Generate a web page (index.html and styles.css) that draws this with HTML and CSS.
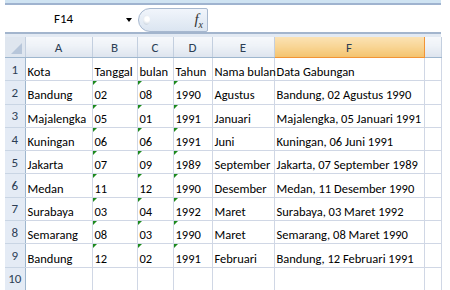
FILE: index.html
```html
<!DOCTYPE html>
<html lang="id">
<head>
  <meta charset="UTF-8" />
  <title>Data Gabungan</title>
  <link rel="stylesheet" href="styles.css">
</head>
<body>
  <div class="window">
    <div class="top-strip"></div>
    <div class="formula-bar">
      <div class="name-box">
        <span class="name">F14</span>
        <span class="drop"></span>
      </div>
      <div class="fx-pill">
        <span class="knob"></span>
        <span class="fx">f<sub>x</sub></span>
      </div>
      <div class="formula-input"></div>
    </div>
    <div class="bar-gap"></div>

    <table class="grid">
      <colgroup>
        <col class="c-row">
        <col class="c-a">
        <col class="c-b">
        <col class="c-c">
        <col class="c-d">
        <col class="c-e">
        <col class="c-f">
        <col class="c-g">
      </colgroup>
      <thead>
        <tr>
          <th class="corner"><span class="all"></span></th>
          <th>A</th>
          <th>B</th>
          <th>C</th>
          <th>D</th>
          <th>E</th>
          <th class="sel">F</th>
          <th></th>
        </tr>
      </thead>
      <tbody>
        <tr>
          <th>1</th><td>Kota</td><td>Tanggal</td><td>bulan</td><td>Tahun</td><td>Nama bulan</td><td>Data Gabungan</td><td></td>
        </tr>
        <tr>
          <th>2</th><td>Bandung</td><td class="txt">02</td><td class="txt">08</td><td class="txt">1990</td><td>Agustus</td><td>Bandung, 02 Agustus 1990</td><td></td>
        </tr>
        <tr>
          <th>3</th><td>Majalengka</td><td class="txt">05</td><td class="txt">01</td><td class="txt">1991</td><td>Januari</td><td>Majalengka, 05 Januari 1991</td><td></td>
        </tr>
        <tr>
          <th>4</th><td>Kuningan</td><td class="txt">06</td><td class="txt">06</td><td class="txt">1991</td><td>Juni</td><td>Kuningan, 06 Juni 1991</td><td></td>
        </tr>
        <tr>
          <th>5</th><td>Jakarta</td><td class="txt">07</td><td class="txt">09</td><td class="txt">1989</td><td>September</td><td>Jakarta, 07 September 1989</td><td></td>
        </tr>
        <tr>
          <th>6</th><td>Medan</td><td class="txt">11</td><td class="txt">12</td><td class="txt">1990</td><td>Desember</td><td>Medan, 11 Desember 1990</td><td></td>
        </tr>
        <tr>
          <th>7</th><td>Surabaya</td><td class="txt">03</td><td class="txt">04</td><td class="txt">1992</td><td>Maret</td><td>Surabaya, 03 Maret 1992</td><td></td>
        </tr>
        <tr>
          <th>8</th><td>Semarang</td><td class="txt">08</td><td class="txt">03</td><td class="txt">1990</td><td>Maret</td><td>Semarang, 08 Maret 1990</td><td></td>
        </tr>
        <tr>
          <th>9</th><td>Bandung</td><td class="txt">12</td><td class="txt">02</td><td class="txt">1991</td><td>Februari</td><td>Bandung, 12 Februari 1991</td><td></td>
        </tr>
        <tr>
          <th>10</th><td></td><td></td><td></td><td></td><td></td><td></td><td></td>
        </tr>
      </tbody>
    </table>
  </div>
</body>
</html>
```

FILE: styles.css
```css
:root {
  --grid-line: #d0d7e5;
  --head-line: #9eb6ce;
  --head-text: #2c3e55;
  --sel-line: #f29436;
}

body {
  margin: 0;
  background: #fff;
  font-family: Carlito, "Liberation Sans Narrow", "Liberation Sans", sans-serif;
  font-size: 12px;
  color: #000;
}

.window {
  width: 436px;
  margin-left: 5px;
}

.top-strip {
  height: 3px;
  background: #cfe3f2;
  border-bottom: 2px solid #9fb3cf;
}

.formula-bar {
  display: flex;
  align-items: center;
  height: 27px;
}

.name-box {
  width: 133px;
  display: flex;
  align-items: center;
  justify-content: center;
  position: relative;
  height: 100%;
}

.name {
  font-size: 13px;
  margin-right: 16px;
}

.drop {
  position: absolute;
  right: 6px;
  top: 13px;
  border-left: 3px solid transparent;
  border-right: 3px solid transparent;
  border-top: 4px solid #000;
}

.fx-pill {
  width: 70px;
  height: 24px;
  margin-top: 3px;
  box-sizing: border-box;
  border: 1px solid #a7b8cf;
  border-radius: 12px 2px 2px 12px;
  background: linear-gradient(#f1f5fb, #dbe5f1);
  display: flex;
  align-items: center;
  justify-content: space-between;
  padding: 0 4px 0 4px;
}

.knob {
  width: 7px;
  height: 10px;
  border-radius: 50%;
  background: radial-gradient(circle at 60% 40%, #fff 30%, #b9c6d6);
}

.fx {
  font-family: "Liberation Serif", serif;
  font-style: italic;
  font-size: 15px;
  color: #333;
}

.fx sub {
  font-size: 10px;
}

.formula-input {
  flex: 1;
  height: 100%;
}

.bar-gap {
  height: 3px;
  border-top: 2px solid #a3b5cd;
  background: #e3eaf3;
}

.grid {
  border-collapse: collapse;
  table-layout: fixed;
  width: 436px;
}

.c-row { width: 20px; }
.c-a { width: 67px; }
.c-b { width: 45px; }
.c-c { width: 36px; }
.c-d { width: 39px; }
.c-e { width: 62px; }
.c-f { width: 150px; }
.c-g { width: 17px; }

.grid th {
  font-weight: normal;
  color: var(--head-text);
  padding: 0;
}

.grid thead th {
  height: 20px;
  background: linear-gradient(#f6f8fb 0%, #eef2f7 45%, #dde4ee 100%);
  border-right: 1px solid #c3cfdf;
  border-bottom: 1px solid var(--head-line);
  font-size: 13px;
  text-align: center;
}

.grid thead th.sel {
  background: linear-gradient(#fbe2b4 0%, #f8d594 50%, #f4c36e 100%);
  border: 1px solid var(--sel-line);
  border-top: none;
}

.grid thead th.corner {
  position: relative;
  background: #dfe6ef;
}

.all {
  position: absolute;
  right: 3px;
  bottom: 3px;
  border-left: 11px solid transparent;
  border-bottom: 11px solid #b7c6da;
}

.grid tbody th {
  height: 22.3px;
  background: #e4ebf5;
  border-right: 1px solid var(--head-line);
  border-bottom: 1px solid #c9d5e4;
  font-size: 13px;
  text-align: center;
}

.grid td {
  border-right: 1px solid var(--grid-line);
  border-bottom: 1px solid var(--grid-line);
  padding: 5px 0 0 2px;
  white-space: nowrap;
  overflow: visible;
  font-size: 12.5px;
  position: relative;
}

.grid td.txt::before {
  content: "";
  position: absolute;
  left: 0;
  top: 0;
  border-top: 4px solid #1d8a1d;
  border-right: 4px solid transparent;
}
```
